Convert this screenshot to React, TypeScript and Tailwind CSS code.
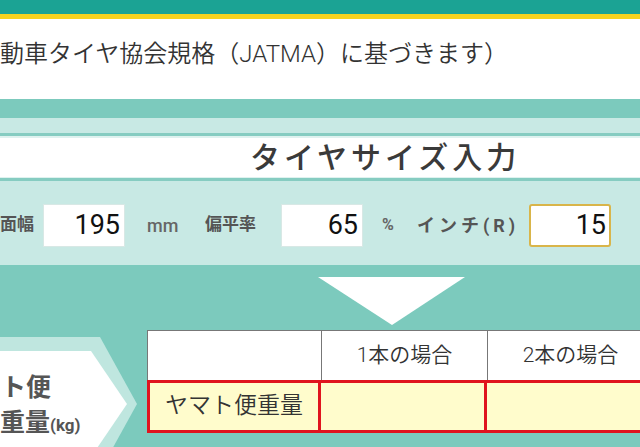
import React from "react"

const font = { fontFamily: "Roboto, 'Noto Sans CJK JP', 'Noto Sans', sans-serif" }

const SizeBox = ({ value, focused }: { value: string; focused?: boolean }) => (
  <div
    className={
      focused
        ? "flex h-[43px] w-[82px] items-center justify-end rounded-[3px] border-2 border-[#d9b54a] bg-white pr-[3px] text-[27px] leading-none text-[#111]"
        : "flex h-[43px] w-[82px] items-center justify-end border border-[#d8e8e5] bg-white pr-[4px] text-[27px] leading-none text-[#111]"
    }
  >
    {value}
  </div>
)

export default function App() {
  return (
    <div className="relative h-[447px] w-[640px] overflow-hidden bg-white" style={font}>
      {/* header bars */}
      <div className="h-[14px] bg-[#1ba394]" />
      <div className="h-[5px] bg-[#f5d320]" />
      <div className="h-[80px] whitespace-nowrap pt-[18px] text-[24px] font-[350] leading-[34px] text-[#333]">
        動車タイヤ協会規格（JATMA）に基づきます）
      </div>

      {/* size input panel */}
      <div className="h-[19px] bg-[#7ccabd]" />
      <div className="h-[15px] bg-[#c8e9e4]" />
      <div className="h-[3px] bg-[#86ccc1]" />
      <div className="h-[2px] bg-[#dff2ef]" />
      <div className="flex h-[39px] items-center bg-white pl-[250px]">
        <span className="text-[30px] font-medium leading-none tracking-[4px] text-[#3a3a3a]">タイヤサイズ入力</span>
      </div>
      <div className="h-[1px] bg-[#dff2ef]" />
      <div className="h-[3px] bg-[#86ccc1]" />
      <div className="flex h-[84px] items-center whitespace-nowrap bg-[#c8e9e4] pt-[4px]">
        <span className="w-[43px] text-[17px] font-bold text-[#555]">面幅</span>
        <SizeBox value="195" />
        <span className="ml-[22px] w-[58px] text-[18px] font-medium text-[#666]">mm</span>
        <span className="w-[76px] text-[17px] font-bold text-[#555]">偏平率</span>
        <SizeBox value="65" />
        <span className="ml-[19px] w-[35px] text-[16px] font-bold text-[#666]">%</span>
        <span className="w-[112px] text-[18px] font-bold tracking-[4px] text-[#555]">インチ(R)</span>
        <SizeBox value="15" focused />
      </div>

      {/* result panel */}
      <div className="h-[182px] bg-[#7ccabd]">
        <div className="flex pl-[318px] pt-[12px]">
          <svg width="147" height="48" viewBox="0 0 147 48">
            <polygon points="0,0 147,0 74,48" fill="#ffffff" />
          </svg>
        </div>
        <div className="mt-[5px] flex">
          <div className="relative h-[117px] w-[147px] shrink-0">
            <svg className="absolute inset-0" width="147" height="117" viewBox="0 0 147 117">
              <polygon points="0,7 100,7 137,74 100,141 0,141" fill="#bfe6df" />
              <polygon points="0,21 91,21 127,74 91,127 0,127" fill="#ffffff" />
            </svg>
            <div className="relative pl-[1px] pt-[40px] text-[25px] font-bold leading-[35px] text-[#555]">
              <div>ト便</div>
              <div className="-ml-[1px]">
                重量<span className="text-[17px]">(kg)</span>
              </div>
            </div>
          </div>
          <div className="w-[520px] shrink-0">
            <div className="grid h-[50px] grid-cols-[174px_166px_166px] border-t border-[#777] bg-white text-[21px] font-[350] text-[#333]">
              <div className="border-l border-[#777]" />
              <div className="flex items-center justify-center border-l border-[#777]">1本の場合</div>
              <div className="flex items-center justify-center border-l border-[#777]">2本の場合</div>
            </div>
            <div className="grid h-[53px] grid-cols-[174px_166px_166px] border-y-[3px] border-[#e0141e] bg-[#fffccc] text-[23px] font-[350] text-[#333]">
              <div className="flex items-center justify-center border-x-[3px] border-[#e0141e]">ヤマト便重量</div>
              <div className="border-r-[3px] border-[#e0141e]" />
              <div className="border-r-[3px] border-[#e0141e]" />
            </div>
          </div>
        </div>
        <div className="h-[1px] bg-[#5f8f89]" />
      </div>
    </div>
  )
}
